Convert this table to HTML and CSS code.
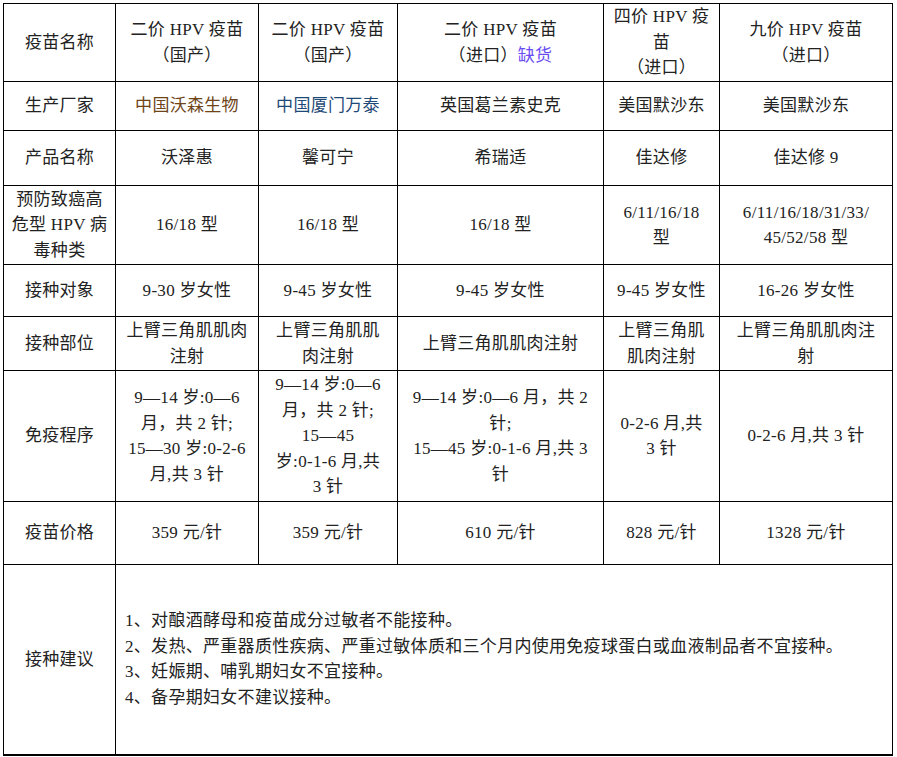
FILE: index.html
```html
<!DOCTYPE html>
<html lang="zh-CN">
<head>
<meta charset="utf-8">
<title>HPV 疫苗对比</title>
<link rel="stylesheet" href="styles.css">
</head>
<body>
<div class="page">
<table class="vaccine">
  <colgroup>
    <col class="c-label">
    <col class="c-a">
    <col class="c-b">
    <col class="c-c">
    <col class="c-d">
    <col class="c-e">
  </colgroup>
  <tbody>
    <tr class="r-name">
      <td>疫苗名称</td>
      <td>二价 HPV 疫苗<br>（国产）</td>
      <td>二价 HPV 疫苗<br>（国产）</td>
      <td>二价 HPV 疫苗<br>（进口）<span class="short">缺货</span></td>
      <td>四价 HPV 疫<br>苗<br>（进口）</td>
      <td>九价 HPV 疫苗<br>（进口）</td>
    </tr>
    <tr class="r-maker">
      <td>生产厂家</td>
      <td class="warm">中国沃森生物</td>
      <td class="cool">中国厦门万泰</td>
      <td>英国葛兰素史克</td>
      <td>美国默沙东</td>
      <td>美国默沙东</td>
    </tr>
    <tr class="r-product">
      <td>产品名称</td>
      <td>沃泽惠</td>
      <td>馨可宁</td>
      <td>希瑞适</td>
      <td>佳达修</td>
      <td>佳达修 9</td>
    </tr>
    <tr class="r-type">
      <td>预防致癌高<br>危型 HPV 病<br>毒种类</td>
      <td>16/18 型</td>
      <td>16/18 型</td>
      <td>16/18 型</td>
      <td>6/11/16/18<br>型</td>
      <td>6/11/16/18/31/33/<br>45/52/58 型</td>
    </tr>
    <tr class="r-target">
      <td>接种对象</td>
      <td>9-30 岁女性</td>
      <td>9-45 岁女性</td>
      <td>9-45 岁女性</td>
      <td>9-45 岁女性</td>
      <td>16-26 岁女性</td>
    </tr>
    <tr class="r-site">
      <td>接种部位</td>
      <td>上臂三角肌肌肉<br>注射</td>
      <td>上臂三角肌肌<br>肉注射</td>
      <td>上臂三角肌肌肉注射</td>
      <td>上臂三角肌<br>肌肉注射</td>
      <td>上臂三角肌肌肉注<br>射</td>
    </tr>
    <tr class="r-schedule">
      <td>免疫程序</td>
      <td>9—14 岁:0—6<br>月，共 2 针;<br>15—30 岁:0-2-6<br>月,共 3 针</td>
      <td>9—14 岁:0—6<br>月，共 2 针;<br>15—45<br>岁:0-1-6 月,共<br>3 针</td>
      <td>9—14 岁:0—6 月，共 2<br>针;<br>15—45 岁:0-1-6 月,共 3<br>针</td>
      <td>0-2-6 月,共<br>3 针</td>
      <td>0-2-6 月,共 3 针</td>
    </tr>
    <tr class="r-price">
      <td>疫苗价格</td>
      <td>359 元/针</td>
      <td>359 元/针</td>
      <td>610 元/针</td>
      <td>828 元/针</td>
      <td>1328 元/针</td>
    </tr>
    <tr class="r-advice">
      <td>接种建议</td>
      <td colspan="5" class="notes">
        <p>1、对酿酒酵母和疫苗成分过敏者不能接种。</p>
        <p>2、发热、严重器质性疾病、严重过敏体质和三个月内使用免疫球蛋白或血液制品者不宜接种。</p>
        <p>3、妊娠期、哺乳期妇女不宜接种。</p>
        <p>4、备孕期妇女不建议接种。</p>
      </td>
    </tr>
  </tbody>
</table>
</div>
</body>
</html>
```

FILE: styles.css
```css
html, body {
  margin: 0;
  padding: 0;
  background: #ffffff;
}

.page {
  padding: 3px 0 0 3px;
}

.vaccine {
  border-collapse: collapse;
  table-layout: fixed;
  width: 890px;
  font-family: "Liberation Serif", "Noto Sans CJK SC", serif;
  font-size: 17px;
  letter-spacing: 0.3px;
  line-height: 25.5px;
  color: #222222;
}

.c-label { width: 112px; }
.c-a { width: 143px; }
.c-b { width: 139px; }
.c-c { width: 206px; }
.c-d { width: 116px; }
.c-e { width: 173px; }

.vaccine td {
  border: 1.5px solid #000;
  text-align: center;
  vertical-align: middle;
  padding: 0 1px;
  white-space: nowrap;
}

.r-name { height: 78px; }
.r-maker { height: 49px; }
.r-product { height: 55px; }
.r-type { height: 79px; }
.r-target { height: 52px; }
.r-site { height: 54px; }
.r-schedule { height: 131px; }
.r-price { height: 63px; }
.r-advice { height: 190px; }

.r-advice td {
  border-bottom-width: 2px;
}

.short {
  color: #6a4df2;
}

.warm {
  color: #6e4418;
}

.cool {
  color: #1f4a78;
}

.vaccine td.notes {
  text-align: left;
  padding-left: 9px;
}

.notes p {
  margin: 0;
  line-height: 25.5px;
}
```
